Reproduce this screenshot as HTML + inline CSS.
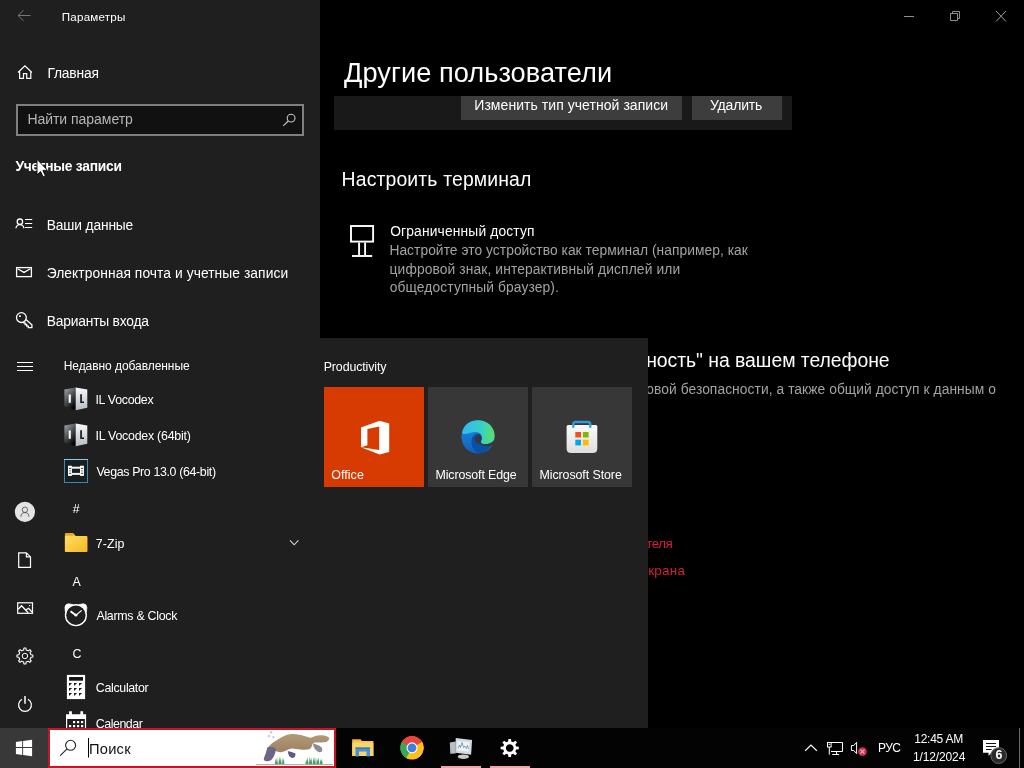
<!DOCTYPE html>
<html lang="ru">
<head>
<meta charset="utf-8">
<title>Параметры</title>
<style>
*{box-sizing:border-box;margin:0;padding:0}
html,body{width:1024px;height:768px;overflow:hidden;background:#000}
body{position:relative;font-family:"Liberation Sans",sans-serif;color:#fff}
.abs{position:absolute}
.t{position:absolute;white-space:nowrap;line-height:1}
#sidebar{left:0;top:0;width:320px;height:768px;background:#1f1f1f}
#main{left:320px;top:0;width:704px;height:768px;background:#000}
#start{left:0;top:338px;width:648px;height:390px;background:#1f1f1f}
#taskbar{left:0;top:728px;width:1024px;height:40px;background:#030303}
svg{position:absolute;overflow:visible}
.tl{position:absolute;left:0;top:0;width:1024px;height:768px;will-change:transform}
</style>
</head>
<body>
<div id="main" class="abs"></div>
<div id="sidebar" class="abs"></div>

<!-- ===== Settings window (sidebar + main) ===== -->
<div id="settings">
  <div class="abs" style="left:16px;top:104px;width:288px;height:32px;border:2px solid #808080;background:#111"></div>
  <div class="abs" style="left:334px;top:96px;width:458px;height:34px;background:#191919"></div>
  <div class="abs" style="left:461px;top:96px;width:221px;height:24px;background:#3d3d3d"></div>
  <div class="abs" style="left:692px;top:96px;width:90px;height:24px;background:#3d3d3d"></div>
  <svg width="1024" height="768" viewBox="0 0 1024 768" style="left:0;top:0" fill="none" stroke="#fff" stroke-width="1.3">
  <!-- back arrow (disabled) -->
  <path d="M30.5 15.5H18M23.6 10.2L18 15.5L23.6 20.8" stroke="#777" stroke-width="1"/>
  <!-- home -->
  <path d="M18 72.5L24.9 65.9L31.9 72.5M19.6 71.4V78.4H23.5V73.7H26.7V78.4H30.8V71.4" stroke-width="1.2"/>
  <!-- search in box -->
  <g stroke="#c4c4c4" stroke-width="1.1"><circle cx="291.1" cy="118.1" r="3.9"/><path d="M288.2 121L283.3 125.8"/></g>
  <!-- your info -->
  <circle cx="19.9" cy="221.7" r="2.7"/>
  <path d="M16 228.2A3.9 3.6 0 0 1 23.8 228.2"/>
  <path d="M25 219.5H32.2M25 223.5H32.2M25 227.5H32.2" stroke-width="1.2"/>
  <!-- mail -->
  <rect x="16.6" y="267.6" width="14.8" height="9"/>
  <path d="M17.6 268.8L24 272.4L30.4 268.8"/>
  <!-- key -->
  <circle cx="21.4" cy="317.6" r="4.9"/>
  <rect x="19.1" y="315.3" width="1.7" height="1.7" fill="#fff" stroke="none"/>
  <path d="M25.9 319.4L31.9 324.7V327.6H28.3V326.1H26.7V324.5H25.1V322.9H23.6L22.9 322.3" stroke-linejoin="miter"/>
  <!-- window controls -->
  <g stroke="#8e8e8e" stroke-width="1">
    <path d="M904 16.5H914"/>
    <path d="M950.5 13.5H957.5V20.5H950.5ZM952.5 13.5V11.5H959.5V18.5H957.5"/>
    <path d="M996 11L1006 21.5M1006 11L996 21.5" stroke="#a0a0a0"/>
  </g>
  <!-- kiosk -->
  <g stroke-width="1.9">
    <rect x="351" y="226" width="22.1" height="15.6"/>
    <path d="M359.1 242.5V255M365.1 242.5V255"/>
    <path d="M352 256H372.2"/>
  </g>
</svg>

<div class="tl">
<span class="t" style="left:61.81px;top:11.08px;font-size:11.6px;letter-spacing:0.221px">Параметры</span>
<span class="t" style="left:47.39px;top:67.12px;font-size:13.8px;letter-spacing:-0.147px">Главная</span>
<span class="t" style="left:27.39px;top:112.25px;font-size:14px;letter-spacing:-0.035px;color:#b5b5b5">Найти параметр</span>
<span class="t" style="left:15.44px;top:160.32px;font-size:13.8px;letter-spacing:-0.258px;font-weight:bold">Учетные записи</span>
<span class="t" style="left:46.78px;top:219.32px;font-size:13.8px;letter-spacing:-0.152px">Ваши данные</span>
<span class="t" style="left:46.69px;top:267.32px;font-size:13.8px;letter-spacing:0.075px">Электронная почта и учетные записи</span>
<span class="t" style="left:46.78px;top:315.32px;font-size:13.8px;letter-spacing:-0.196px">Варианты входа</span>
<span class="t" style="left:344.02px;top:59.18px;font-size:27.2px;letter-spacing:0.048px">Другие пользователи</span>
<span class="t" style="left:474.29px;top:98.35px;font-size:14px;letter-spacing:0.053px">Изменить тип учетной записи</span>
<span class="t" style="left:709.99px;top:98.35px;font-size:14px;letter-spacing:-0.183px">Удалить</span>
<span class="t" style="left:341.55px;top:169.83px;font-size:19.4px;letter-spacing:0.146px">Настроить терминал</span>
<span class="t" style="left:390.20px;top:225.32px;font-size:13.8px;letter-spacing:0.159px">Ограниченный доступ</span>
<span class="t" style="left:389.39px;top:244.32px;font-size:13.8px;letter-spacing:0.049px;color:#a3a3a3">Настройте это устройство как терминал (например, как</span>
<span class="t" style="left:389.60px;top:262.82px;font-size:13.8px;letter-spacing:0.116px;color:#a3a3a3">цифровой знак, интерактивный дисплей или</span>
<span class="t" style="left:389.77px;top:281.32px;font-size:13.8px;letter-spacing:0.110px;color:#a3a3a3">общедоступный браузер).</span>
<span class="t" style="left:351.62px;top:350.58px;font-size:19.4px;letter-spacing:-0.038px">Используйте &quot;Семейная безопасность&quot; на вашем телефоне</span>
<span class="t" style="left:457.77px;top:382.92px;font-size:13.8px;letter-spacing:0.069px;color:#a3a3a3">Получите возможности цифровой безопасности, а также общий доступ к данным о</span>
<span class="t" style="left:378.80px;top:537.46px;font-size:13.4px;letter-spacing:-0.530px;color:#d3203d">Создание локальной учетной записи пользователя</span>
<span class="t" style="left:431.23px;top:563.56px;font-size:13.4px;letter-spacing:0.304px;color:#d3203d">Параметры входа и блокировки экрана</span>
</div>
</div>

<!-- ===== Start menu ===== -->
<div id="start" class="abs"></div>
<div id="startmenu">
  <div class="abs" style="left:324px;top:387px;width:100px;height:100px;background:#d83b01"></div>
  <div class="abs" style="left:428px;top:387px;width:100px;height:100px;background:#373737"></div>
  <div class="abs" style="left:532px;top:387px;width:100px;height:100px;background:#373737"></div>
  <svg width="1024" height="768" viewBox="0 0 1024 768" style="left:0;top:0" fill="none" stroke="#fff" stroke-width="1.3">
  <defs>
    <linearGradient id="gIL" x1="0" y1="0" x2="0.6" y2="1"><stop offset="0" stop-color="#a9adb1"/><stop offset="0.55" stop-color="#4a4e50"/><stop offset="1" stop-color="#050505"/></linearGradient>
    <linearGradient id="gIR" x1="0" y1="0" x2="0" y2="1"><stop offset="0" stop-color="#fafafc"/><stop offset="1" stop-color="#b4bcc4"/></linearGradient>
    <linearGradient id="gFo" x1="0" y1="0" x2="1" y2="1"><stop offset="0" stop-color="#fddc6e"/><stop offset="0.5" stop-color="#fbcb40"/><stop offset="1" stop-color="#f5b826"/></linearGradient>
    <linearGradient id="gEd1" x1="0" y1="0" x2="1" y2="0"><stop offset="0" stop-color="#35b6f2"/><stop offset="0.6" stop-color="#35d0c8"/><stop offset="1" stop-color="#5fe060"/></linearGradient>
    <linearGradient id="gEd2" x1="0" y1="0" x2="0" y2="1"><stop offset="0" stop-color="#1f8fe0"/><stop offset="1" stop-color="#0f5fb8"/></linearGradient>
    <linearGradient id="gBag" x1="0" y1="0" x2="0" y2="1"><stop offset="0" stop-color="#fafafa"/><stop offset="1" stop-color="#dedede"/></linearGradient>
    <g id="ilv" stroke="none">
      <path d="M64.4 7.4L75.7 5.5V28.3L64.4 24.2Z" fill="url(#gIL)"/>
      <path d="M75.7 5.5L87.3 7.6V25.8L75.7 28.3Z" fill="url(#gIR)"/>
      <rect x="68.7" y="12.5" width="2.1" height="8.3" fill="#fff"/>
      <path d="M80.2 12.3H81.9V19.4H84V20.9H80.2Z" fill="#16181c"/>
    </g>
  </defs>
  <!-- hamburger -->
  <path d="M17 362.5H33M17 366.5H33M17 370.5H33" stroke-width="1.1"/>
  <!-- IL Vocodex x2 -->
  <use href="#ilv" y="382"/>
  <use href="#ilv" y="418"/>
  <!-- Vegas -->
  <g stroke="none">
    <rect x="64" y="459" width="24" height="24" fill="#17201f"/>
    <rect x="64.5" y="459.5" width="23" height="23" fill="none" stroke="#3f86b4" stroke-width="1"/>
    <path d="M64 459.5H88" stroke="#8ac6ea" stroke-width="1"/>
    <rect x="68" y="465.7" width="3.9" height="10.2" fill="#fff"/>
    <rect x="80" y="465.7" width="3.9" height="10.2" fill="#fff"/>
    <rect x="71.9" y="466.7" width="8.1" height="2" fill="#f2f2f2"/>
    <rect x="71.9" y="472.9" width="8.1" height="2" fill="#f2f2f2"/>
    <rect x="69" y="468" width="1.9" height="1" fill="#333"/><rect x="69" y="470.4" width="1.9" height="1" fill="#777"/><rect x="69" y="472.8" width="1.9" height="1" fill="#333"/>
    <rect x="81" y="468" width="1.9" height="1" fill="#333"/><rect x="81" y="470.4" width="1.9" height="1" fill="#777"/><rect x="81" y="472.8" width="1.9" height="1" fill="#333"/>
  </g>
  <!-- folder -->
  <g stroke="none">
    <path d="M64.9 534Q64.9 533 65.9 533H72.6Q73.3 533 73.8 533.6L75.6 536H86.2Q87.3 536 87.3 537V551Q87.3 552 86.2 552H65.9Q64.9 552 64.9 551Z" fill="#f0a51e"/>
    <path d="M64.9 536.6Q64.9 535.8 65.9 535.8H72.4L74.4 535.2L75.6 536H86.2Q87.3 536 87.3 537V551Q87.3 552 86.2 552H65.9Q64.9 552 64.9 551Z" fill="url(#gFo)"/>
  </g>
  <!-- chevron -->
  <path d="M290 540.3L294.2 544.8L298.4 540.3" stroke="#d8d8d8" stroke-width="1.1"/>
  <!-- alarm -->
  <g>
    <circle cx="75.900" cy="615.200" r="10.400" stroke-width="1.400"/>
    <path d="M65.380 611.980Q62.800 601 72.870 604.630A11 11 0 0 0 65.380 611.980ZM86.420 611.980Q89 601 78.930 604.630A11 11 0 0 1 86.420 611.980Z" fill="#fff" stroke-width="0.600"/>
    <path d="M75.900 615.200L70.500 611.300" stroke-width="2"/>
    <path d="M75.900 615.200L81.700 610.400" stroke-width="1.200"/>
    <circle cx="75.900" cy="615.200" r="1.400" fill="#fff" stroke="none"/>
  </g>
  <!-- calculator -->
  <g stroke="none">
    <rect x="66.9" y="674.9" width="18.2" height="24.2" fill="#fff"/>
    <rect x="69.1" y="677" width="13.9" height="3.7" fill="#151515"/>
    <g fill="#1a1a1a">
      <path d="M69 683h3.1l-3.1 3.1zM74 683h3.1l-3.1 3.1zM79 683h3.1l-3.1 3.1z"/>
      <path d="M69 688h3.1l-3.1 3.1zM74 688h3.1l-3.1 3.1zM79 688h3.1l-3.1 3.1z"/>
      <path d="M69 693h3.1l-3.1 3.1zM74 693h3.1l-3.1 3.1zM79 693h3.1l-3.1 3.1z"/>
    </g>
  </g>
  <!-- calendar -->
  <g stroke="none" fill="#fff">
    <path d="M66 714.2H69.1V711.2H71.9V714.2H80.4V711.2H83.1V714.2H86.1V728H84.9V719H67.2V728H66Z"/>
    <rect x="73" y="721" width="2.2" height="2.2"/><rect x="77" y="721" width="2.2" height="2.2"/><rect x="81" y="721" width="2.2" height="2.2"/>
    <rect x="69" y="725" width="2.2" height="2.2"/><rect x="73" y="725" width="2.2" height="2.2"/><rect x="77" y="725" width="2.2" height="2.2"/><rect x="81" y="725" width="2.2" height="2.2"/>
  </g>
  <!-- rail: user -->
  <circle cx="24.9" cy="511.9" r="10.1" fill="#e4e4e4" stroke="none"/>
  <g stroke="#4a4a4a" stroke-width="0.8"><circle cx="24.9" cy="509.8" r="2.7"/><path d="M20.9 516.8A4 4.2 0 0 1 28.9 516.8"/></g>
  <!-- rail: document -->
  <path d="M18.7 552.8H26.4L30.5 556.9V567.3H18.7ZM26.4 552.8V556.9H30.5" stroke-width="1.2"/>
  <!-- rail: pictures -->
  <rect x="17.7" y="602.8" width="14.8" height="10.5" stroke-width="1.2"/>
  <path d="M18.2 609.3L21.5 605.7L28.2 612.8M25.6 610L28.6 608.4L32 612"/>
  <rect x="29" y="605" width="1.2" height="1.2" fill="#fff" stroke="none"/>
  <!-- rail: settings gear -->
  <path d="M23.69 649.92 L23.90 648.06 L25.90 648.06 L26.11 649.92 L28.34 650.84 L29.80 649.68 L31.22 651.10 L30.06 652.56 L30.98 654.79 L32.84 655.00 L32.84 657.00 L30.98 657.21 L30.06 659.44 L31.22 660.90 L29.80 662.32 L28.34 661.16 L26.11 662.08 L25.90 663.94 L23.90 663.94 L23.69 662.08 L21.46 661.16 L20.00 662.32 L18.58 660.90 L19.74 659.44 L18.82 657.21 L16.96 657.00 L16.96 655.00 L18.82 654.79 L19.74 652.56 L18.58 651.10 L20.00 649.68 L21.46 650.84Z" stroke-linejoin="round" stroke-width="1.1"/>
  <circle cx="24.9" cy="656" r="2.7" stroke-width="1"/>
  <!-- rail: power -->
  <path d="M22 699.3A6.4 6.4 0 1 0 28 699.3" stroke-width="1.2"/>
  <path d="M25 696V703.8" stroke="#e6e6e6" stroke-width="1.7"/>
  <!-- Office tile icon -->
  <path d="M361 427.6L379.6 420.8L389.2 423.5V451.9L379.6 454.6L361 447.3L379.2 449.9V426.6L367.4 428.9V445.2L361 447.3Z" fill="#fff" stroke="none"/>
  <!-- Edge tile icon -->
  <g stroke="none">
    <circle cx="478" cy="437" r="16.6" fill="url(#gEd2)"/>
    <path d="M462 433C463.500 424.500 470 420.300 478 420.300C488 420.300 494.600 427.500 494.600 435.500C494.600 441.500 490.500 444.500 486 444.500C482 444.500 480.200 442.500 481.500 440.500C483 438 481.500 432 476 432C470 432 464.500 436 462 433Z" fill="url(#gEd1)"/>
    <path d="M471.500 441C471.500 436.500 475 433.500 478.500 433.500C481.800 434.500 482.500 438 481 440.500C479.800 442.500 481.500 444.800 486 444.800C488.500 444.800 490.500 444 492 442.800C490 449 484.500 453.300 478.500 453.300C473.500 450.500 471.500 446 471.500 441Z" fill="#0c4fa6"/>
    <path d="M474.500 438.500C475.500 435.800 478 434.500 480 435.200C481.800 436.200 481.800 438.500 481 440.500C480.300 441.800 480.500 443 481.800 444C478.500 444.200 475 442.500 474.500 438.500Z" fill="#373737"/>
    <path d="M481.300 443.600C486 445 490 443.600 494.600 440.200L493.400 444.700C489 446.800 485 446.800 480.800 444.800Z" fill="#373737"/>
  </g>
  <!-- Store tile icon -->
  <g stroke="none">
    <path d="M573.3 428V424.300Q573.300 422 575.600 422H588Q590.300 422 590.300 424.300V428" fill="none" stroke="#2f9bd8" stroke-width="2.4"/>
    <path d="M566.600 426.500Q566.600 425 568.100 425H595.800Q597.300 425 597.300 426.500V448.500Q597.300 453 592.800 453H571.100Q566.600 453 566.600 448.500Z" fill="url(#gBag)"/>
    <path d="M573.300 425V427.800M590.300 425V427.800" stroke="#2f9bd8" stroke-width="2.200"/>
    <rect x="575.300" y="432" width="5.700" height="5.500" fill="#f25022"/>
    <rect x="582.900" y="432" width="5.700" height="5.500" fill="#7fba00"/>
    <rect x="575.300" y="439.700" width="5.700" height="5.700" fill="#00a4ef"/>
    <rect x="582.900" y="439.700" width="5.700" height="5.700" fill="#ffb900"/>
  </g>
</svg>

<div class="tl">
<span class="t" style="left:63.73px;top:360.14px;font-size:12px;letter-spacing:-0.061px">Недавно добавленные</span>
<span class="t" style="left:95.45px;top:393.50px;font-size:12.4px;letter-spacing:-0.294px">IL Vocodex</span>
<span class="t" style="left:95.45px;top:429.50px;font-size:12.4px;letter-spacing:-0.238px">IL Vocodex (64bit)</span>
<span class="t" style="left:96.39px;top:465.50px;font-size:12.4px;letter-spacing:-0.354px">Vegas Pro 13.0 (64-bit)</span>
<span class="t" style="left:72.85px;top:502.90px;font-size:12.4px">#</span>
<span class="t" style="left:95.85px;top:537.70px;font-size:12.4px;letter-spacing:0.100px">7-Zip</span>
<span class="t" style="left:72.55px;top:575.50px;font-size:12.4px">A</span>
<span class="t" style="left:96.41px;top:609.80px;font-size:12.4px;letter-spacing:-0.280px">Alarms &amp; Clock</span>
<span class="t" style="left:72.46px;top:647.80px;font-size:12.4px">C</span>
<span class="t" style="left:95.83px;top:681.50px;font-size:12.4px;letter-spacing:-0.326px">Calculator</span>
<span class="t" style="left:95.83px;top:717.50px;font-size:12.4px;letter-spacing:-0.472px">Calendar</span>
<span class="t" style="left:323.69px;top:360.50px;font-size:12.4px;letter-spacing:-0.112px">Productivity</span>
<span class="t" style="left:331.16px;top:468.50px;font-size:12.4px;letter-spacing:0.098px">Office</span>
<span class="t" style="left:435.45px;top:468.50px;font-size:12.4px;letter-spacing:-0.104px">Microsoft Edge</span>
<span class="t" style="left:539.53px;top:468.50px;font-size:12.4px;letter-spacing:-0.074px">Microsoft Store</span>
</div>
</div>

<!-- ===== Taskbar ===== -->
<div id="taskbar" class="abs"></div>
<div id="tb">
  <div class="abs" style="left:0;top:728px;width:48px;height:40px;background:#383838"></div>
  <div class="abs" style="left:48px;top:728px;width:288px;height:40px;background:#fff;border:2px solid #cd1226"></div>
  <div class="abs" style="left:441px;top:766px;width:40px;height:2px;background:#f5a1a9"></div>
  <div class="abs" style="left:490px;top:766px;width:40px;height:2px;background:#f5a1a9"></div>
  <div class="abs" style="left:1019px;top:728px;width:1px;height:40px;background:#6a6a6a"></div>
  <svg width="1024" height="768" viewBox="0 0 1024 768" style="left:0;top:0" fill="none" stroke="#fff" stroke-width="1.1">
  <defs>
    <linearGradient id="gPl" x1="0" y1="0" x2="0" y2="1"><stop offset="0" stop-color="#b39a78"/><stop offset="1" stop-color="#9c8263"/></linearGradient>
    <clipPath id="chc"><circle cx="412" cy="747.8" r="11.8"/></clipPath>
  </defs>
  <!-- windows logo -->
  <g stroke="none" fill="#fff">
    <path d="M15.900 742L22.200 741.100V747H15.900ZM23.100 741L32.100 739.700V747H23.100ZM15.900 747.900H22.200V754.900L15.900 754ZM23.100 747.900H32.100V756.200L23.100 755Z"/>
  </g>
  <!-- taskbar search icon -->
  <g stroke="#222" stroke-width="1.1"><circle cx="70.600" cy="745.300" r="5"/><path d="M66.800 749.200L60.200 755.700"/></g>
  <!-- caret -->
  <path d="M88.500 738V757.500" stroke="#000" stroke-width="1"/>
  <!-- platypus -->
  <g stroke="none">
    <path d="M256 764.600H333" stroke="#aaa" stroke-width="1"/>
    <path d="M313 743.100C315 744.500 318 745 319.500 745.800C321.500 747 322.800 748.500 322.200 750.500C321.800 752.300 319.500 752.600 317.500 751.500C315.500 750 314.500 748.500 313.500 746.500Z" fill="#8d8a92"/>
    <path d="M267.400 747.900C269.500 745.500 272 742.800 275.400 740.900C278.500 738.800 282 737 285.100 735.600C288 734.400 291 734 293.700 734C297.500 734.100 301 735 304.400 736.100C306.800 736.900 309 737.800 310.900 737.700C312.500 737.500 313.800 736.500 315.200 736.100C318 735.300 321 735 323.800 735.600C327 736.200 329.600 737.300 329.200 738.800C328.800 740.500 327.500 741.600 325.900 742C323 742.700 320 742.500 317.300 742.600C315.800 742.700 314 742.600 313 743.100C312 745.500 311.500 748 309.800 749C307 750 303.500 749.700 300.200 749.500C297 749.300 294.500 748.300 291.600 748.500C289 748.700 287 750.300 285.100 751.100C283.700 751.700 282.300 752.200 280.800 752.200C278.800 752.200 277 751.800 275.400 751.100C274 750.600 273 750.100 272.200 749.500Z" fill="url(#gPl)"/>
    <path d="M287.800 751C290 751.800 293 752.300 295.300 753.300C295.600 755 295.300 756.800 294.200 757.600C292.800 758.200 291 757.900 290 757.100C288.800 755.500 288 753.500 287.800 751Z" fill="#5f5a84"/>
    <path d="M267.400 747.400C270 746.800 273 747 275.400 748.100C276 750.500 275.600 752.500 274.600 754.400C273.800 756.500 272.800 758.500 271.400 759.700C269.800 761 267.500 761.500 265.800 761C264.300 760.600 263.600 759.800 263.800 758.700C264.200 756.800 265 755 265.800 753.300C266.300 751.300 266.600 749.300 267.400 747.400Z" fill="#6b6589"/>
    <path d="M274.900 764.300L275.400 758.500L276.200 762L277 757L277.900 764.300ZM278.300 764.300L279.200 756.500L280 761.500L280.800 757.500L281.700 764.300ZM282 764.300L282.700 758L283.300 761L284 757.500L284.300 764.300Z" fill="#4c9c6a"/>
    <path d="M305.500 764.300L306 759L306.900 762L307.700 757L308.600 764.300ZM308.900 764.300L309.700 756.500L310.500 761L311.300 757.500L312.200 764.300ZM312.600 764.300L313.300 757L314.100 762L315 756.500L315.800 764.300ZM316.200 764.300L316.900 758L317.700 761.500L318.500 757L319.300 764.300ZM319.700 764.300L320.300 759L321 762L321.800 758.500L322.700 764.300Z" fill="#4c9c6a"/>
    <circle cx="271.100" cy="732.400" r="0.900" fill="none" stroke="#8f98c8" stroke-width="0.600"/>
    <circle cx="269" cy="736.100" r="0.800" fill="none" stroke="#8f98c8" stroke-width="0.600"/>
    <circle cx="273.300" cy="737.200" r="0.700" fill="none" stroke="#8f98c8" stroke-width="0.600"/>
  </g>
  <!-- file explorer -->
  <g stroke="none">
    <path d="M352.200 739.600H360.500L362 741H373.400V756H352.200Z" fill="#f4c64e"/>
    <path d="M352.200 739.600H360.500L361.500 740.600H352.200Z" fill="#e8a92c"/>
    <path d="M352.200 742.500H373.400V756H352.200Z" fill="#fad566"/>
    <path d="M355.500 747.500H370V756.400H366.500V751.500H359V756.400H355.500Z" fill="#4a90d4"/>
    <path d="M355.500 747.500H370V749H355.500Z" fill="#3a78c0"/>
  </g>
  <!-- chrome -->
  <g stroke="none" clip-path="url(#chc)">
    <circle cx="412" cy="747.800" r="12" fill="#e8453c"/>
    <path d="M412 747.800L401.600 741.800A12 12 0 0 0 406 758.200L417.500 759Z" fill="#34a853"/>
    <path d="M412 747.800L406 758.200A12 12 0 0 0 422.400 741.800H412Z" fill="#fbc116"/>
    <path d="M412 747.800L401.600 741.800A12 12 0 0 1 422.400 741.800Z" fill="#e8453c"/>
  </g>
  <circle cx="412" cy="747.800" r="5.500" fill="#fff" stroke="none"/>
  <circle cx="412" cy="747.800" r="4.400" fill="#3f7ee8" stroke="none"/>
  <!-- task manager monitor -->
  <g stroke="none">
    <path d="M449.800 742.400L455.700 741.500V753.500L450.300 753.700Z" fill="#b9bec3"/>
    <path d="M455.700 738L472.100 739.900L471.100 754.700L455.500 752.800Z" fill="#d5d9dd"/>
    <path d="M457.300 740.800L469.700 742.300L469 751.600L457.200 750.400Z" fill="#e9f3f9"/>
    <path d="M458 748.500L459.500 745L460.500 747.500L462 742.500L463.500 747.500L465 746L466.500 748.500L467.500 745.500L468.500 749" fill="none" stroke="#5f7f95" stroke-width="0.700"/>
    <ellipse cx="463.400" cy="756.700" rx="5.600" ry="2.300" fill="#c7cbcf"/>
  </g>
  <!-- settings gear (taskbar) -->
  <path d="M508.11 741.59 L508.40 738.89 L511.00 738.89 L511.29 741.59 L513.10 742.35 L515.22 740.64 L517.06 742.48 L515.35 744.60 L516.11 746.41 L518.81 746.70 L518.81 749.30 L516.11 749.59 L515.35 751.40 L517.06 753.52 L515.22 755.36 L513.10 753.65 L511.29 754.41 L511.00 757.11 L508.40 757.11 L508.11 754.41 L506.30 753.65 L504.18 755.36 L502.34 753.52 L504.05 751.40 L503.29 749.59 L500.59 749.30 L500.59 746.70 L503.29 746.41 L504.05 744.60 L502.34 742.480 L504.18 740.64 L506.30 742.35ZM509.700 744.200A3.800 3.800 0 1 0 509.710 744.200Z" fill="#fff" fill-rule="evenodd" stroke="none"/>
  <!-- tray chevron -->
  <path d="M805.200 750.700L811 745L816.800 750.700" stroke-width="1.200"/>
  <!-- network -->
  <g stroke-width="1">
    <path d="M831 742.500H842.500V751.500H831"/>
    <path d="M836.600 751.500V754.500M832.200 754.500H839"/>
    <rect x="827.500" y="742.500" width="3.600" height="4.500"/>
    <path d="M829.300 747V754.700M828.600 744.300H830"/>
  </g>
  <!-- speaker -->
  <path d="M851.400 745.500H853.800L856.600 742.400V753.600L853.800 750.500H851.400Z" stroke-width="1"/>
  <circle cx="862.400" cy="751.600" r="4.400" fill="#c8334e" stroke="none"/>
  <path d="M860.400 749.600L864.400 753.600M864.400 749.600L860.400 753.600" stroke="#f6b4c0" stroke-width="1.100"/>
  <!-- notifications -->
  <g stroke="none">
    <path d="M983 740H999V752.800H991.500L988.500 755.800V752.800H983Z" fill="#fff"/>
    <path d="M986 743H996V744H986ZM986 746H996V747H986ZM986 749H991.500V750H986Z" fill="#111"/>
    <circle cx="998.700" cy="755.600" r="7.900" fill="#2b2b2b" stroke="#6a6a6a" stroke-width="1"/>
  </g>
</svg>
<div class="tl"><span class="t" style="left:995.4px;top:749.4px;font-size:12.4px;font-weight:bold;color:#fff">6</span></div>

<div class="tl">
<span class="t" style="left:88.92px;top:742.06px;font-size:14.7px;letter-spacing:0.258px;color:#111111">Поиск</span>
<span class="t" style="left:877.90px;top:741.64px;font-size:12px;letter-spacing:-0.478px">РУС</span>
<span class="t" style="left:914.28px;top:732.64px;font-size:12px;letter-spacing:-0.252px">12:45 AM</span>
<span class="t" style="left:913.00px;top:750.84px;font-size:12px;letter-spacing:-0.135px">1/12/2024</span>
</div>
</div>
<!-- mouse cursor -->
<svg width="1024" height="768" viewBox="0 0 1024 768" style="left:0;top:0;pointer-events:none">
  <path d="M37 159.300V174.900L40.600 171.600L43.100 176.900L45.400 175.900L42.900 170.400H47.600Z" fill="#fff" stroke="#000" stroke-width="0.900" stroke-linejoin="miter"/>
</svg>
</body>
</html>
